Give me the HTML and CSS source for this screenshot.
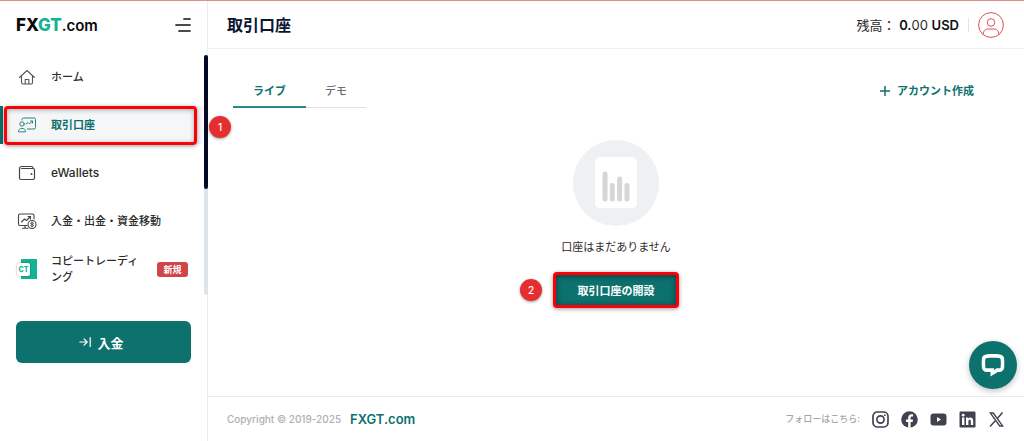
FILE: index.html
```html
<!DOCTYPE html>
<html lang="ja">
<head>
  <meta charset="UTF-8">
  <meta name="viewport" content="width=device-width, initial-scale=1.0">
  <title>取引口座 - FXGT.com</title>
  <link rel="stylesheet" href="styles.css">
</head>
<body>
  <div class="layout">
    <aside class="sidebar">
      <div class="sidebar-top">
        <a href="#" class="logo">FX<span class="logo-accent">GT</span><span class="logo-com">.com</span></a>
        <button type="button" class="menu-toggle" aria-label="メニュー">
          <svg width="16" height="16" viewBox="0 0 16 16" fill="none" stroke="#111" stroke-width="1.7" stroke-linecap="round">
            <path d="M9 2h6M1 8h14M4 14h11"/>
          </svg>
        </button>
      </div>

      <nav class="nav">
        <a href="#" class="nav-item">
          <svg class="nav-icon" viewBox="0 0 20 20" fill="none" stroke="#555" stroke-width="1.1" stroke-linejoin="round" stroke-linecap="round">
            <path d="M2.5 10.5 10 3.5l7.5 7M4.5 9v6.5A1.5 1.5 0 0 0 6 17h8a1.5 1.5 0 0 0 1.5-1.5V9M8.2 17v-4.5h3.6V17"/>
          </svg>
          <span class="nav-label">ホーム</span>
        </a>
        <a href="#" class="nav-item active">
          <svg class="nav-icon" viewBox="0 0 20 20" fill="none" stroke="#2b8481" stroke-width="1" stroke-linejoin="round" stroke-linecap="round">
            <path d="M5 5V4.5A1.5 1.5 0 0 1 6.5 3h10.500A1.5 1.5 0 0 1 18.500 4.500v8a1.5 1.5 0 0 1-1.5 1.500h-6.500"/>
            <circle cx="5" cy="9" r="2.2"/>
            <path d="M1.500 16.500c-.5-4.300 7.500-4.300 7 0zM9 9l2-1.500L12.500 9l3-3M13.500 6h2v2"/>
          </svg>
          <span class="nav-label">取引口座</span>
          <span class="marker-frame"></span>
          <span class="marker-number marker-right">1</span>
        </a>
        <a href="#" class="nav-item">
          <svg class="nav-icon" viewBox="0 0 20 20" fill="none" stroke="#444" stroke-width="1.2" stroke-linejoin="round" stroke-linecap="round">
            <path d="M16 5.500V4.800A1.500 1.500 0 0 0 14.500 3.500h-10a2 2 0 0 0-2 2V15A1.500 1.500 0 0 0 4 16.500h12a1.500 1.500 0 0 0 1.500-1.500V7A1.500 1.500 0 0 0 16 5.500H4.500"/>
            <circle cx="14.500" cy="11" r=".4" fill="#444"/>
          </svg>
          <span class="nav-label nav-label-latin">eWallets</span>
        </a>
        <a href="#" class="nav-item">
          <svg class="nav-icon" viewBox="0 0 20 20" fill="none" stroke="#444" stroke-width="1.1" stroke-linejoin="round" stroke-linecap="round">
            <path d="M10 14.500H3A1.500 1.500 0 0 1 1.500 13V4.500A1.500 1.500 0 0 1 3 3h12.500A1.500 1.500 0 0 1 17 4.500V8M8 14.500V17M5.500 17.200H11M4.500 11l3-3 2 1.500 4-4M11 5.500h2.500V8"/>
            <circle cx="15" cy="13.500" r="4"/>
            <path d="M16.500 12.200c-.8-.9-2.800-.7-2.800.3s2.800.8 2.800 1.900-2.200 1.200-3 .3M15 11v5" stroke-width=".9"/>
          </svg>
          <span class="nav-label">入金・出金・資金移動</span>
        </a>
        <a href="#" class="nav-item">
          <span class="copy-icon"><span class="copy-icon-text">CT</span></span>
          <span class="nav-label nav-label-wrap">コピートレーディング</span>
          <span class="tag">新規</span>
        </a>
        <div class="nav-scroll"><div class="nav-scroll-thumb"></div></div>
      </nav>

      <button type="button" class="deposit">
        <svg width="12" height="12" viewBox="0 0 12 12" fill="none" stroke="#fff" stroke-width="1.2" stroke-linecap="round" stroke-linejoin="round">
          <path d="M.8 6h7M5 2.800 8.200 6 5 9.200M11.200 1.500v9"/>
        </svg>
        入金
      </button>
    </aside>

    <div class="main">
      <header class="header">
        <h1>取引口座</h1>
        <div class="account">
          <span class="balance">残高： <b>0.</b>00 <b>USD</b></span>
          <a href="#" class="profile" aria-label="プロフィール">
            <svg width="26" height="26" viewBox="0 0 26 26" fill="none" stroke="#db5151" stroke-width="1">
              <circle cx="13" cy="13" r="12.400"/>
              <circle cx="13" cy="10.500" r="3.800"/>
              <path d="M5 22.300c.5-3.800 2.500-5.300 5-5.300h6c2.500 0 4.500 1.500 5 5.300"/>
            </svg>
          </a>
        </div>
      </header>

      <main class="content">
        <div class="toolbar">
          <div class="tabs">
            <button type="button" class="tab selected">ライブ</button>
            <button type="button" class="tab">デモ</button>
          </div>
          <a href="#" class="create">
            <svg width="10" height="10" viewBox="0 0 10 10" stroke="#0d6e6b" stroke-width="1.500"><path d="M5 0v10M0 5h10"/></svg>
            アカウント作成
          </a>
        </div>

        <div class="empty">
          <svg width="86" height="86" viewBox="0 0 86 86">
            <circle cx="43" cy="43" r="43" fill="#eff0f4"/>
            <rect x="22" y="17" width="42" height="51" rx="5" fill="#fff"/>
            <path d="M32 34v25M39.300 45.500V59M46.600 39v20M54 45.500V59" stroke="#d6d6d6" stroke-width="5" stroke-linecap="round"/>
          </svg>
          <p>口座はまだありません</p>
          <div class="open-wrap">
            <button type="button" class="open-account">取引口座の開設</button>
            <span class="marker-number marker-left">2</span>
          </div>
        </div>
      </main>

      <footer class="footer">
        <span class="copyright">Copyright © 2019-2025</span>
        <a href="#" class="footer-brand">FXGT.com</a>
        <div class="social">
          <span class="follow">フォローはこちら:</span>
          <a href="#" aria-label="Instagram">
            <svg width="17" height="17" viewBox="0 0 17 17" fill="none" stroke="#40434f" stroke-width="1.700">
              <rect x="1" y="1" width="15" height="15" rx="4.200"/>
              <circle cx="8.500" cy="8.500" r="3.600"/>
              <circle cx="12.800" cy="4.200" r=".9" fill="#40434f" stroke="none"/>
            </svg>
          </a>
          <a href="#" aria-label="Facebook">
            <svg width="17" height="17" viewBox="0 0 17 17">
              <circle cx="8.500" cy="8.500" r="8.300" fill="#40434f"/>
              <path d="M7.200 17v-6H5V8.500h2.200V6.800c0-2.300 1.300-3.500 3.300-3.500.9 0 1.600.1 1.600.1v2.200H11c-1.100 0-1.400.7-1.400 1.400v1.500H12l-.4 2.500h-2v6z" fill="#fff"/>
            </svg>
          </a>
          <a href="#" aria-label="YouTube">
            <svg width="17" height="17" viewBox="0 0 17 17">
              <rect x=".5" y="2.500" width="16" height="12" rx="3" fill="#40434f"/>
              <path d="M7 6v5l4-2.500z" fill="#fff"/>
            </svg>
          </a>
          <a href="#" aria-label="LinkedIn">
            <svg width="17" height="17" viewBox="0 0 17 17">
              <rect x=".5" y=".5" width="16" height="16" rx="1.200" fill="#40434f"/>
              <circle cx="4.200" cy="4.200" r="1.400" fill="#fff"/>
              <path d="M3 6.600h2.400V14H3zM7 6.600h2.300v1c1-1.700 4.900-1.700 4.900 2V14h-2.400v-3.800c0-2.100-2.400-1.900-2.400 0V14H7z" fill="#fff"/>
            </svg>
          </a>
          <a href="#" aria-label="X">
            <svg width="17" height="17" viewBox="0 0 17 17" fill="none" stroke="#40434f">
              <path d="M2.300 2h3l9.400 13h-3z" stroke-width="1.300"/>
              <path d="M14.500 1.500 9.500 7.300M7.300 9.700 2 15.500" stroke-width="1.500"/>
            </svg>
          </a>
        </div>
      </footer>
    </div>
  </div>

  <button type="button" class="chat" aria-label="チャット">
    <svg width="24" height="24" viewBox="0 0 24 24">
      <path d="M5 1.500c4.500-.6 9.500-.6 14 0 2.200.3 3.900 1.800 4.100 4 .3 3.300.3 6 0 9.200-.2 2.200-1.900 4-4.100 4.200h-2.200L9.500 23.500V19H5c-2.200-.2-3.900-2-4.100-4.200-.3-3.200-.3-6 0-9.300.2-2.200 1.900-3.700 4.100-4z" fill="#fff"/>
      <path d="M6 5c4-.5 8-.5 12 0 1 .1 1.600.8 1.700 1.700.2 2.400.2 4.600 0 7-.1.900-.7 1.600-1.700 1.600h-2.500L13 17.300v-2H6c-1 0-1.600-.7-1.700-1.600-.2-2.400-.2-4.600 0-7C4.400 5.800 5 5.100 6 5z" fill="#0d716e"/>
    </svg>
  </button>
</body>
</html>
```
FILE: styles.css
```css
/* General Styles */
* {
  box-sizing: border-box;
}

body {
  margin: 0;
  font-family: Inter, "Noto Sans CJK JP", sans-serif;
  font-size: 11px;
  line-height: 16px;
  color: #2b2b2b;
  background-color: #fff;
}

a {
  color: inherit;
  text-decoration: none;
}

button {
  font-family: inherit;
  border: none;
  padding: 0;
  background: none;
  cursor: pointer;
}

svg {
  display: block;
  flex-shrink: 0;
}

.layout {
  display: flex;
  min-height: 100vh;
  border-top: 1px solid #dc9090;
}

/* Sidebar */
.sidebar {
  width: 208px;
  flex-shrink: 0;
  border-right: 1px solid #ececee;
}

.sidebar-top {
  display: flex;
  align-items: center;
  justify-content: space-between;
  height: 48px;
  padding: 0 16px;
}

.logo {
  font-size: 17px;
  font-weight: 800;
  color: #0a0a0a;
}

.logo-accent {
  color: #14b393;
}

.logo-com {
  font-size: 15px;
  font-weight: 600;
}

.nav {
  position: relative;
  display: flex;
  flex-direction: column;
  gap: 10px;
  margin-top: 5px;
  padding: 4px 4px 7px 0;
}

.nav-item {
  position: relative;
  display: flex;
  align-items: center;
  height: 38px;
  padding: 0 15px 0 14px;
  border-left: 3px solid transparent;
  font-weight: 500;
}

.nav-item.active {
  background-color: #f4f6f8;
  border-left-color: #0d6e6b;
  color: #0d6e6b;
  font-weight: 700;
}

.nav-icon {
  width: 20px;
  height: 20px;
}

.nav-label {
  margin-left: 14px;
}

.nav-label-latin {
  font-size: 12px;
}

.nav-label-wrap {
  flex: 1;
}

.copy-icon {
  display: flex;
  align-items: center;
  width: 20px;
  height: 20px;
  background: linear-gradient(to right, transparent 4px, #14b393 4px);
}

.copy-icon-text {
  width: 13px;
  border-radius: 2px;
  background-color: #fff;
  box-shadow: 0 0 2px rgba(0, 0, 0, 0.4);
  color: #14b393;
  font-size: 7px;
  font-weight: 800;
  line-height: 13px;
  text-align: center;
}

.tag {
  width: 31px;
  margin-left: 16px;
  border-radius: 3px;
  background-color: #d04545;
  color: #fff;
  font-size: 9px;
  font-weight: 700;
  line-height: 15px;
  text-align: center;
}

.nav-scroll {
  position: absolute;
  top: 1px;
  right: -1px;
  bottom: 0;
  width: 4px;
  border-radius: 2px;
  background-color: #dfe4ea;
}

.nav-scroll-thumb {
  height: 56%;
  border-radius: 2px;
  background-color: #020a26;
}

.deposit {
  display: flex;
  align-items: center;
  justify-content: center;
  gap: 6px;
  width: calc(100% - 32px);
  height: 42px;
  margin: 26px 16px 16px;
  padding-right: 4px;
  border-radius: 6px;
  background-color: #0d716e;
  color: #fff;
  font-size: 13px;
  font-weight: 700;
}

/* Step markers */
.marker-frame {
  position: absolute;
  top: 0;
  right: 6px;
  bottom: -1px;
  left: 1px;
  border: 3px solid #fb0007;
  border-radius: 4px;
  box-shadow: 0 1px 4px rgba(0, 0, 0, 0.4), inset 0 1px 5px rgba(0, 0, 0, 0.3);
}

.marker-number {
  position: absolute;
  width: 22px;
  border-radius: 50%;
  background-color: #e62e31;
  box-shadow: 0 1px 3px rgba(0, 0, 0, 0.4);
  color: #fff;
  font-size: 10px;
  font-weight: 500;
  line-height: 22px;
  text-align: center;
}

.marker-right {
  top: 10px;
  right: -28px;
}

.marker-left {
  top: 7px;
  left: -33px;
}

/* Main */
.main {
  display: flex;
  flex: 1;
  flex-direction: column;
  min-width: 0;
}

.header {
  display: flex;
  align-items: center;
  justify-content: space-between;
  height: 48px;
  padding: 0 20px 0 19px;
  border-bottom: 1px solid #efeff1;
}

.header h1 {
  margin: 0;
  color: #0b1533;
  font-size: 16px;
  font-weight: 700;
}

.account {
  display: flex;
  align-items: center;
}

.balance {
  font-size: 13px;
}

.balance b {
  color: #111;
  font-weight: 600;
}

.profile {
  position: relative;
  margin-left: 19px;
}

.profile::before {
  content: "";
  position: absolute;
  top: 6px;
  left: -10px;
  width: 1px;
  height: 14px;
  background-color: #e5e5e8;
}

.content {
  flex: 1;
  padding: 24px 50px 24px 25px;
}

.toolbar {
  display: flex;
  align-items: center;
  justify-content: space-between;
}

.tabs {
  display: flex;
}

.tab {
  height: 35px;
  padding: 0 19px;
  border-bottom: 1px solid #e2e2e4;
  color: #6f6f72;
  font-size: 11px;
  font-weight: 500;
}

.tab.selected {
  padding: 0 20px;
  border-bottom: 2px solid #2b8784;
  color: #0d716e;
  font-weight: 700;
}

.create {
  display: flex;
  align-items: center;
  gap: 7px;
  color: #0d716e;
  font-weight: 700;
}

.empty {
  display: flex;
  flex-direction: column;
  align-items: center;
  margin: 32px -25px 0 0;
}

.empty p {
  margin: 13px 0 17px;
}

.open-wrap {
  position: relative;
}

.open-account {
  width: 126px;
  height: 36px;
  border: 3px solid #fb0007;
  border-radius: 4px;
  background-color: #0d716e;
  box-shadow: 0 1px 4px rgba(0, 0, 0, 0.4), inset 0 1px 6px rgba(0, 0, 0, 0.5);
  color: #fff;
  font-size: 11px;
  font-weight: 700;
}

/* Footer */
.footer {
  display: flex;
  align-items: center;
  height: 45px;
  padding: 0 19px;
  border-top: 1px solid #ebebed;
}

.copyright {
  color: #aeb0b5;
  font-size: 10px;
  font-weight: 500;
}

.footer-brand {
  margin-left: 9px;
  color: #0d716e;
  font-size: 13px;
  font-weight: 600;
}

.social {
  display: flex;
  align-items: center;
  gap: 12px;
  margin-left: auto;
}

.follow {
  color: #a4a5aa;
  font-size: 9px;
  font-weight: 500;
}

/* Chat button */
.chat {
  position: fixed;
  right: 7px;
  bottom: 52px;
  display: flex;
  align-items: center;
  justify-content: center;
  width: 48px;
  height: 48px;
  border-radius: 50%;
  background-color: #0d716e;
  box-shadow: 0 2px 6px rgba(0, 0, 0, 0.25);
}
```
